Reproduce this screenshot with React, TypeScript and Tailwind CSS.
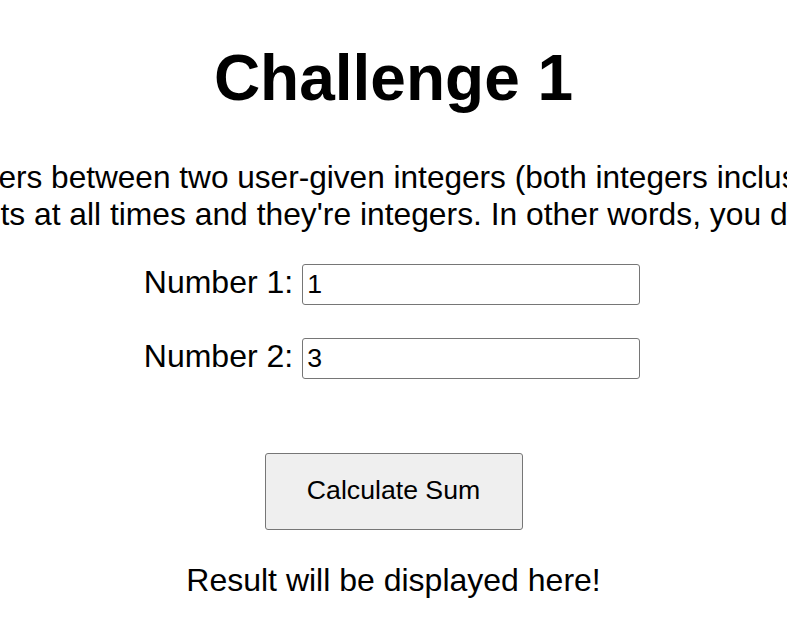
import { useState } from "react";

export default function App() {
  const [first, setFirst] = useState("1");
  const [second, setSecond] = useState("3");

  return (
    <div className="flex min-h-screen flex-col items-center overflow-hidden bg-white font-['Liberation_Sans',Arial,sans-serif] text-black">
      <h1 className="mt-[42px] text-[64px] font-bold leading-[1.15]">
        Challenge 1
      </h1>

      <p className="mt-[43px] whitespace-nowrap text-center text-[31.6px] leading-[1.17]">
        integers between two user-given integers (both integers inclusive).
        <br />
        <span className="text-[31.8px]">
          inputs at all times and they're integers. In other words, you don't,
        </span>
      </p>

      <div className="mt-[31px] flex items-baseline gap-[9px] pr-[3px] text-[32px] leading-[1.15]">
        <label htmlFor="num1">Number 1:</label>
        <input
          id="num1"
          type="text"
          value={first}
          onChange={(e) => setFirst(e.target.value)}
          className="h-[41px] w-[338px] rounded-[3px] border border-[#767676] bg-white px-[4px] text-[26.67px] outline-none"
        />
      </div>

      <div className="mt-[33px] flex items-baseline gap-[9px] pr-[3px] text-[32px] leading-[1.15]">
        <label htmlFor="num2">Number 2:</label>
        <input
          id="num2"
          type="text"
          value={second}
          onChange={(e) => setSecond(e.target.value)}
          className="h-[41px] w-[338px] rounded-[3px] border border-[#767676] bg-white px-[4px] text-[26.67px] outline-none"
        />
      </div>

      <button
        type="button"
        className="mt-[74px] h-[77px] w-[258px] rounded-[3px] border border-[#767676] bg-[#efefef] pb-[3px] text-[26.67px]"
      >
        Calculate Sum
      </button>

      <p className="mt-[32px] text-[32px] leading-[1.15]">
        Result will be displayed here!
      </p>
    </div>
  );
}
